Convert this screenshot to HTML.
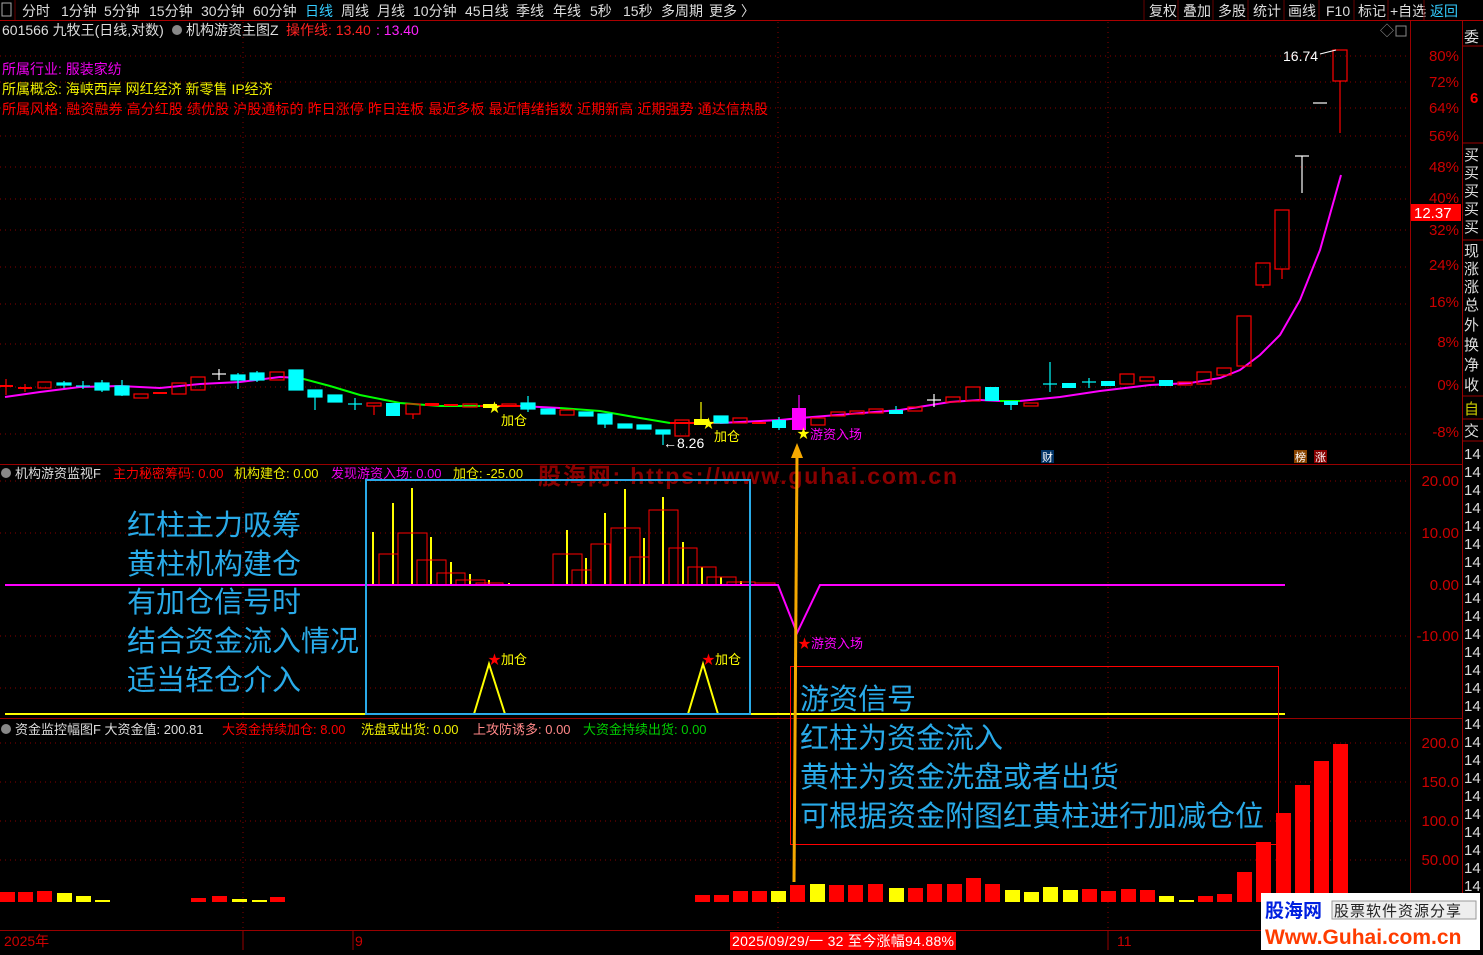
<!DOCTYPE html><html><head><meta charset="utf-8"><style>
body{margin:0;background:#000;width:1483px;height:950px;overflow:hidden;font-family:"Liberation Sans","Noto Sans CJK SC",sans-serif;}
svg text{font-family:"Liberation Sans","Noto Sans CJK SC",sans-serif;}
</style></head><body>
<svg width="1483" height="950" viewBox="0 0 1483 950" xmlns="http://www.w3.org/2000/svg">
<rect width="1483" height="950" fill="#000"/>
<!-- toolbar -->
<g font-size="14" fill="#ddd">
<rect x="2" y="3" width="9" height="13" fill="none" stroke="#aaa"/>
<line x1="15" y1="0" x2="15" y2="20" stroke="#600"/>
<text x="22" y="16">分时</text><text x="61" y="16">1分钟</text><text x="104" y="16">5分钟</text><text x="149" y="16">15分钟</text><text x="201" y="16">30分钟</text><text x="253" y="16">60分钟</text>
<text x="305" y="16" fill="#3cf">日线</text>
<text x="341" y="16">周线</text><text x="377" y="16">月线</text><text x="413" y="16">10分钟</text><text x="465" y="16">45日线</text><text x="516" y="16">季线</text><text x="553" y="16">年线</text><text x="590" y="16">5秒</text><text x="623" y="16">15秒</text><text x="661" y="16">多周期</text><text x="709" y="16">更多 〉</text>
<text x="1149" y="16">复权</text><text x="1183" y="16">叠加</text><text x="1218" y="16">多股</text><text x="1253" y="16">统计</text><text x="1288" y="16">画线</text><text x="1326" y="16">F10</text><text x="1358" y="16">标记</text><text x="1390" y="16">+自选</text>
<text x="1430" y="16" fill="#3cf">返回</text>
</g>
<g stroke="#600"><line x1="1144" y1="0" x2="1144" y2="20"/><line x1="1178" y1="0" x2="1178" y2="20"/><line x1="1213" y1="0" x2="1213" y2="20"/><line x1="1248" y1="0" x2="1248" y2="20"/><line x1="1284" y1="0" x2="1284" y2="20"/><line x1="1319" y1="0" x2="1319" y2="20"/><line x1="1354" y1="0" x2="1354" y2="20"/><line x1="1388" y1="0" x2="1388" y2="20"/><line x1="1424" y1="0" x2="1424" y2="20"/></g>
<line x1="0" y1="20.5" x2="1483" y2="20.5" stroke="#a00"/>
<!-- frame lines -->
<g stroke="#900" fill="none">
<line x1="1410.5" y1="21" x2="1410.5" y2="950"/>
<line x1="1462.5" y1="21" x2="1462.5" y2="950"/>
<line x1="0" y1="464.5" x2="1462" y2="464.5"/>
<line x1="0" y1="718.5" x2="1462" y2="718.5"/>
<line x1="0" y1="930.5" x2="1462" y2="930.5"/>
</g>
<!-- grid dotted -->
<g stroke="#800" stroke-dasharray="1 4">
<line x1="0" y1="56" x2="1410" y2="56"/><line x1="0" y1="82" x2="1410" y2="82"/><line x1="0" y1="108" x2="1410" y2="108"/><line x1="0" y1="136" x2="1410" y2="136"/><line x1="0" y1="167" x2="1410" y2="167"/><line x1="0" y1="199" x2="1410" y2="199"/><line x1="0" y1="230" x2="1410" y2="230"/><line x1="0" y1="267" x2="1410" y2="267"/><line x1="0" y1="304" x2="1410" y2="304"/><line x1="0" y1="344" x2="1410" y2="344"/><line x1="0" y1="387" x2="1410" y2="387"/><line x1="0" y1="434" x2="1410" y2="434"/>
<line x1="0" y1="481" x2="1410" y2="481"/><line x1="0" y1="533" x2="1410" y2="533"/><line x1="0" y1="636" x2="1410" y2="636"/><line x1="0" y1="688" x2="1410" y2="688"/>
<line x1="0" y1="743" x2="1410" y2="743"/><line x1="0" y1="782" x2="1410" y2="782"/><line x1="0" y1="821" x2="1410" y2="821"/><line x1="0" y1="860" x2="1410" y2="860"/>
<line x1="243" y1="22" x2="243" y2="930"/><line x1="778" y1="22" x2="778" y2="930"/><line x1="1108" y1="22" x2="1108" y2="930"/>
</g>
<!-- axis labels -->
<g font-size="15" fill="#c00" text-anchor="end">
<text x="1459" y="61">80%</text><text x="1459" y="87">72%</text><text x="1459" y="113">64%</text><text x="1459" y="141">56%</text><text x="1459" y="172">48%</text><text x="1459" y="203">40%</text><text x="1459" y="235">32%</text><text x="1459" y="270">24%</text><text x="1459" y="307">16%</text><text x="1459" y="347">8%</text><text x="1459" y="390">0%</text><text x="1459" y="437">-8%</text>
<text x="1459" y="486">20.00</text><text x="1459" y="538">10.00</text><text x="1459" y="590">0.00</text><text x="1459" y="641">-10.00</text>
<text x="1459" y="748">200.0</text><text x="1459" y="787">150.0</text><text x="1459" y="826">100.0</text><text x="1459" y="865">50.00</text>
</g>
<rect x="1411" y="204" width="50" height="17" fill="#f00"/>
<text x="1414" y="218" font-size="15" fill="#fff">12.37</text>
<!-- sidebar -->
<g font-size="15" fill="#ddd">
<text x="1464" y="42">委</text>
<text x="1470" y="103" fill="#f00" font-weight="bold">6</text>
<text x="1464" y="160">买</text><text x="1464" y="178">买</text><text x="1464" y="196">买</text><text x="1464" y="214">买</text><text x="1464" y="232">买</text>
<text x="1464" y="256">现</text><text x="1464" y="274">涨</text><text x="1464" y="292">涨</text><text x="1464" y="310">总</text><text x="1464" y="330">外</text><text x="1464" y="350">换</text><text x="1464" y="370">净</text><text x="1464" y="390">收</text>
<text x="1464" y="414" fill="#cc0">自</text><text x="1464" y="436">交</text>
</g>
<g stroke="#900"><line x1="1462" y1="46" x2="1483" y2="46"/><line x1="1462" y1="143" x2="1483" y2="143"/><line x1="1462" y1="240" x2="1483" y2="240"/><line x1="1462" y1="396" x2="1483" y2="396"/><line x1="1462" y1="419" x2="1483" y2="419"/><line x1="1462" y1="441" x2="1483" y2="441"/></g>
<g font-size="15" fill="#ddd">
<text x="1464" y="459">14</text><text x="1464" y="477">14</text><text x="1464" y="495">14</text><text x="1464" y="513">14</text><text x="1464" y="531">14</text><text x="1464" y="549">14</text><text x="1464" y="567">14</text><text x="1464" y="585">14</text><text x="1464" y="603">14</text><text x="1464" y="621">14</text><text x="1464" y="639">14</text><text x="1464" y="657">14</text><text x="1464" y="675">14</text><text x="1464" y="693">14</text><text x="1464" y="711">14</text><text x="1464" y="729">14</text><text x="1464" y="747">14</text><text x="1464" y="765">14</text><text x="1464" y="783">14</text><text x="1464" y="801">14</text><text x="1464" y="819">14</text><text x="1464" y="837">14</text><text x="1464" y="855">14</text><text x="1464" y="873">14</text><text x="1464" y="891">14</text>
</g>
<!-- header texts -->
<g font-size="14">
<text x="2" y="35" fill="#ddd">601566 九牧王(日线,对数)</text>
<circle cx="177" cy="30" r="5" fill="#888"/>
<text x="186" y="35" fill="#ddd">机构游资主图Z</text>
<text x="286" y="35" fill="#f22">操作线: 13.40</text>
<text x="376" y="35" fill="#f2f">: 13.40</text>
<text x="2" y="74" fill="#e0e">所属行业:  服装家纺</text>
<text x="2" y="94" fill="#ee0">所属概念:  海峡西岸 网红经济 新零售 IP经济</text>
<text x="2" y="114" fill="#f00" textLength="766">所属风格:  融资融券 高分红股 绩优股 沪股通标的 昨日涨停 昨日连板 最近多板 最近情绪指数 近期新高 近期强势 通达信热股</text>
<text x="1380" y="36" fill="#888">◇</text>
<rect x="1396" y="26" width="10" height="10" fill="none" stroke="#888"/>
</g>
<!-- MA line -->
<polyline fill="none" stroke="#f0f" stroke-width="2" points="5,397 40,392 80,387 120,386 160,388 200,384 240,382 280,377 300,378"/>
<polyline fill="none" stroke="#0f0" stroke-width="2" points="300,378 330,386 360,395 400,403 440,406 480,406"/>
<polyline fill="none" stroke="#f00" stroke-width="2" points="480,406 520,406"/>
<polyline fill="none" stroke="#f0f" stroke-width="2" points="520,406 560,408"/>
<polyline fill="none" stroke="#0f0" stroke-width="2" points="560,408 600,411 640,418 670,423"/>
<polyline fill="none" stroke="#f00" stroke-width="2" points="670,423 720,423"/>
<polyline fill="none" stroke="#f0f" stroke-width="2" points="720,423 780,420 800,418 850,414 900,410 950,402 980,400 1000,401"/>
<polyline fill="none" stroke="#0f0" stroke-width="2" points="1000,401 1020,401"/>
<polyline fill="none" stroke="#f0f" stroke-width="2" points="1020,401 1060,397 1100,391 1150,385 1190,383 1220,378 1240,370 1260,355 1280,335 1300,300 1320,250 1341,175"/>
<!-- candles -->
<g stroke-width="1.2">
<g stroke="#f00"><line x1="6" y1="379" x2="6" y2="395"/><line x1="0" y1="386" x2="13" y2="386" stroke-width="2"/>
<line x1="25" y1="384" x2="25" y2="392"/><line x1="18" y1="388" x2="32" y2="388" stroke-width="2"/></g>
<rect x="38" y="382" width="13" height="6" fill="none" stroke="#f00"/>
<g fill="#0ff" stroke="#0ff"><line x1="64" y1="381" x2="64" y2="388"/><rect x="57" y="383" width="14" height="2"/>
<line x1="83" y1="381" x2="83" y2="389"/><line x1="76" y1="386" x2="90" y2="386"/>
<rect x="95" y="383" width="14" height="7"/><line x1="102" y1="380" x2="102" y2="392"/>
<rect x="115" y="386" width="14" height="9"/><line x1="122" y1="380" x2="122" y2="396"/></g>
<rect x="134" y="394" width="14" height="4" fill="none" stroke="#f00"/>
<rect x="153" y="392" width="14" height="2" fill="#f00"/>
<rect x="172" y="383" width="14" height="11" fill="none" stroke="#f00"/>
<rect x="191" y="377" width="14" height="13" fill="none" stroke="#f00"/>
<g stroke="#fff"><line x1="219" y1="369" x2="219" y2="380"/><line x1="212" y1="374" x2="226" y2="374"/></g>
<g fill="#0ff" stroke="#0ff"><rect x="231" y="375" width="14" height="5"/><line x1="238" y1="373" x2="238" y2="389"/>
<rect x="250" y="373" width="14" height="7"/><line x1="257" y1="371" x2="257" y2="382"/></g>
<rect x="270" y="372" width="14" height="8" fill="none" stroke="#f00"/>
<g fill="#0ff" stroke="#0ff"><rect x="289" y="370" width="14" height="20"/>
<rect x="308" y="390" width="14" height="7"/><line x1="315" y1="390" x2="315" y2="410"/>
<rect x="328" y="395" width="14" height="7"/>
<line x1="355" y1="398" x2="355" y2="410"/><line x1="348" y1="404" x2="362" y2="404"/></g>
<rect x="367" y="403" width="14" height="3" fill="none" stroke="#f00"/><line x1="374" y1="406" x2="374" y2="415" stroke="#f00"/>
<rect x="386" y="403" width="14" height="13" fill="#0ff"/>
<rect x="406" y="404" width="14" height="10" fill="none" stroke="#f00"/><line x1="413" y1="414" x2="413" y2="419" stroke="#f00"/>
<rect x="425" y="403" width="14" height="3" fill="#f00"/>
<line x1="444" y1="405" x2="458" y2="405" stroke="#f00" stroke-width="2"/>
<rect x="463" y="404" width="14" height="3" fill="none" stroke="#f00"/>
<rect x="483" y="404" width="14" height="4" fill="#ff0"/>
<rect x="502" y="404" width="14" height="2" fill="none" stroke="#f00"/>
<g fill="#0ff" stroke="#0ff"><rect x="521" y="403" width="14" height="6"/><line x1="528" y1="396" x2="528" y2="412"/>
<rect x="541" y="409" width="14" height="5"/></g>
<rect x="560" y="410" width="14" height="5" fill="none" stroke="#f00"/>
<g fill="#0ff" stroke="#0ff"><rect x="579" y="412" width="14" height="4"/>
<rect x="598" y="414" width="14" height="10"/><line x1="605" y1="414" x2="605" y2="428"/>
<rect x="618" y="424" width="14" height="4"/>
<rect x="637" y="425" width="14" height="4"/>
<rect x="656" y="430" width="14" height="4"/><line x1="663" y1="430" x2="663" y2="445"/></g>
<rect x="675" y="420" width="14" height="16" fill="none" stroke="#f00"/>
<rect x="694" y="419" width="14" height="6" fill="#ff0"/><line x1="701" y1="402" x2="701" y2="425" stroke="#ff0"/>
<g fill="#0ff" stroke="#0ff"><rect x="714" y="416" width="14" height="7"/></g>
<rect x="733" y="418" width="14" height="5" fill="none" stroke="#f00"/>
<line x1="752" y1="423" x2="766" y2="423" stroke="#f00" stroke-width="2"/>
<rect x="772" y="420" width="14" height="8" fill="#0ff"/><line x1="779" y1="417" x2="779" y2="430" stroke="#0ff"/>
<rect x="792" y="408" width="14" height="22" fill="#f0f"/><line x1="799" y1="395" x2="799" y2="430" stroke="#f0f"/>
<rect x="811" y="418" width="14" height="7" fill="none" stroke="#f00"/>
<rect x="831" y="412" width="14" height="4" fill="none" stroke="#f00"/>
<rect x="850" y="411" width="14" height="3" fill="none" stroke="#f00"/>
<rect x="869" y="409" width="14" height="4" fill="none" stroke="#f00"/>
<rect x="889" y="410" width="14" height="4" fill="#0ff"/><line x1="896" y1="406" x2="896" y2="414" stroke="#0ff"/>
<rect x="908" y="407" width="14" height="4" fill="none" stroke="#f00"/>
<g stroke="#fff"><line x1="934" y1="394" x2="934" y2="407"/><line x1="927" y1="400" x2="941" y2="400"/></g>
<rect x="946" y="397" width="14" height="5" fill="none" stroke="#f00"/>
<rect x="966" y="387" width="14" height="14" fill="none" stroke="#f00"/>
<rect x="985" y="387" width="14" height="14" fill="#0ff"/>
<rect x="1004" y="401" width="14" height="4" fill="#0ff"/><line x1="1011" y1="401" x2="1011" y2="410" stroke="#0ff"/>
<rect x="1024" y="403" width="14" height="3" fill="none" stroke="#f00"/>
<g stroke="#0ff"><line x1="1050" y1="362" x2="1050" y2="392"/><line x1="1043" y1="384" x2="1057" y2="384"/></g>
<rect x="1062" y="383" width="14" height="5" fill="#0ff"/>
<g stroke="#0ff"><line x1="1089" y1="378" x2="1089" y2="388"/><line x1="1082" y1="382" x2="1096" y2="382"/></g>
<rect x="1101" y="381" width="14" height="5" fill="#0ff"/>
<rect x="1120" y="374" width="14" height="10" fill="none" stroke="#f00"/>
<rect x="1140" y="377" width="14" height="4" fill="none" stroke="#f00"/>
<rect x="1159" y="380" width="14" height="6" fill="#0ff"/>
<rect x="1178" y="382" width="14" height="3" fill="none" stroke="#f00"/>
<rect x="1197" y="372" width="14" height="12" fill="none" stroke="#f00"/>
<rect x="1217" y="368" width="14" height="7" fill="none" stroke="#f00"/>
<rect x="1237" y="316" width="14" height="50" fill="none" stroke="#f00"/>
<rect x="1256" y="263" width="14" height="22" fill="none" stroke="#f00"/><line x1="1263" y1="285" x2="1263" y2="288" stroke="#f00"/>
<rect x="1275" y="210" width="14" height="59" fill="none" stroke="#f00"/><line x1="1282" y1="269" x2="1282" y2="279" stroke="#f00"/>
<g stroke="#fff"><line x1="1302" y1="156" x2="1302" y2="193"/><line x1="1295" y1="156" x2="1309" y2="156"/><line x1="1313" y1="103" x2="1327" y2="103"/></g>
<rect x="1333" y="50" width="14" height="31" fill="none" stroke="#f00"/><line x1="1340" y1="81" x2="1340" y2="133" stroke="#f00"/>
</g>
<text x="1283" y="61" font-size="14" fill="#fff">16.74</text>
<line x1="1320" y1="54" x2="1336" y2="50" stroke="#fff"/>
<text x="663" y="448" font-size="14" fill="#fff">←8.26</text>
<text x="488" y="412" font-size="13" fill="#ff0">★</text><text x="501" y="425" font-size="13" fill="#ff0">加仓</text>
<text x="702" y="428" font-size="13" fill="#ff0">★</text><text x="714" y="441" font-size="13" fill="#ff0">加仓</text>
<text x="797" y="438" font-size="13" fill="#ff0">★</text><text x="810" y="439" font-size="13" fill="#f0f">游资入场</text>
<rect x="1041" y="450" width="13" height="13" fill="#036"/><text x="1042" y="461" font-size="11" fill="#fff">财</text>
<rect x="1294" y="450" width="13" height="13" fill="#840"/><text x="1295" y="461" font-size="11" fill="#fff">榜</text>
<rect x="1314" y="450" width="13" height="13" fill="#800"/><text x="1315" y="461" font-size="11" fill="#fff">涨</text>
<!-- indicator panel header -->
<g font-size="13">
<circle cx="6" cy="473" r="5" fill="#888"/>
<text x="15" y="478" fill="#ddd">机构游资监视F</text>
<text x="113" y="478" fill="#f00">主力秘密筹码: 0.00</text>
<text x="234" y="478" fill="#ee0">机构建仓: 0.00</text>
<text x="331" y="478" fill="#e0e">发现游资入场: 0.00</text>
<text x="453" y="478" fill="#ee0">加仓: -25.00</text>
</g>
<text x="538" y="484" font-size="23" font-weight="bold" fill="#8a0000" textLength="419">股海网:  https://www.guhai.com.cn</text>
<!-- yellow bars -->
<g stroke="#ff0" stroke-width="2">
<line x1="373" y1="585" x2="373" y2="532"/><line x1="393" y1="585" x2="393" y2="503"/><line x1="412" y1="585" x2="412" y2="488"/><line x1="431" y1="585" x2="431" y2="537"/><line x1="451" y1="585" x2="451" y2="562"/><line x1="470" y1="585" x2="470" y2="574"/><line x1="489" y1="585" x2="489" y2="580"/><line x1="509" y1="585" x2="509" y2="583"/>
<line x1="567" y1="585" x2="567" y2="530"/><line x1="586" y1="585" x2="586" y2="558"/><line x1="605" y1="585" x2="605" y2="513"/><line x1="625" y1="585" x2="625" y2="489"/><line x1="644" y1="585" x2="644" y2="538"/><line x1="663" y1="585" x2="663" y2="497"/><line x1="683" y1="585" x2="683" y2="542"/><line x1="702" y1="585" x2="702" y2="567"/><line x1="721" y1="585" x2="721" y2="577"/><line x1="741" y1="585" x2="741" y2="581"/>
</g>
<g fill="none" stroke="#f00">
<rect x="379" y="554" width="19" height="31"/><rect x="398" y="533" width="29" height="52"/><rect x="417" y="560" width="29" height="25"/><rect x="437" y="573" width="28" height="12"/><rect x="456" y="580" width="29" height="5"/><rect x="476" y="583" width="27" height="2"/>
<rect x="553" y="554" width="29" height="31"/><rect x="572" y="570" width="19" height="15"/><rect x="591" y="544" width="19" height="41"/><rect x="611" y="528" width="29" height="57"/><rect x="630" y="557" width="19" height="28"/><rect x="649" y="510" width="29" height="75"/><rect x="669" y="548" width="28" height="37"/><rect x="688" y="567" width="28" height="18"/><rect x="707" y="577" width="29" height="8"/><rect x="727" y="582" width="28" height="3"/><rect x="755" y="583" width="20" height="2"/>
</g>
<polyline fill="none" stroke="#f0f" stroke-width="2" points="5,585 778,585 797,633 820,585 1285,585"/>
<polyline fill="none" stroke="#ff0" stroke-width="2" points="5,714 474,714 489,664 505,714 688,714 703,664 718,714 1285,714"/>
<text x="488" y="664" font-size="13" fill="#f00">★</text><text x="501" y="664" font-size="13" fill="#ff0">加仓</text>
<text x="702" y="664" font-size="13" fill="#f00">★</text><text x="715" y="664" font-size="13" fill="#ff0">加仓</text>
<text x="798" y="648" font-size="13" fill="#f00">★</text><text x="811" y="648" font-size="13" fill="#f0f">游资入场</text>
<rect x="366" y="480" width="384" height="234" fill="none" stroke="#29aae8" stroke-width="2"/>
<rect x="790.5" y="666.5" width="488" height="178" fill="none" stroke="#f00"/>
<!-- orange arrow -->
<line x1="797" y1="455" x2="794" y2="882" stroke="#f5a800" stroke-width="3"/>
<polygon points="797,443 791,458 803,458" fill="#f5a800"/>
<!-- annotation text -->
<g font-size="29" fill="#29aae8">
<text x="127" y="535">红柱主力吸筹</text><text x="127" y="574">黄柱机构建仓</text><text x="127" y="612">有加仓信号时</text><text x="127" y="651">结合资金流入情况</text><text x="127" y="690">适当轻仓介入</text>
<text x="800" y="709">游资信号</text><text x="800" y="748">红柱为资金流入</text><text x="800" y="787">黄柱为资金洗盘或者出货</text><text x="800" y="826">可根据资金附图红黄柱进行加减仓位</text>
</g>
<!-- third panel -->
<g font-size="13">
<circle cx="6" cy="729" r="5" fill="#888"/>
<text x="15" y="734" fill="#ddd">资金监控幅图F 大资金值: 200.81</text>
<text x="222" y="734" fill="#f00">大资金持续加仓: 8.00</text>
<text x="361" y="734" fill="#ee0">洗盘或出货: 0.00</text>
<text x="473" y="734" fill="#f88">上攻防诱多: 0.00</text>
<text x="583" y="734" fill="#0c0">大资金持续出货: 0.00</text>
</g>
<g fill="#f00">
<rect x="0" y="892" width="15" height="10"/><rect x="18" y="892" width="15" height="10"/><rect x="37" y="891" width="15" height="11"/>
<rect x="191" y="898" width="15" height="4"/><rect x="212" y="896" width="15" height="6"/><rect x="270" y="897" width="15" height="5"/>
<rect x="695" y="895" width="15" height="7"/><rect x="714" y="895" width="15" height="7"/><rect x="733" y="891" width="15" height="11"/><rect x="752" y="891" width="15" height="11"/><rect x="790" y="885" width="15" height="17"/><rect x="829" y="885" width="15" height="17"/><rect x="848" y="885" width="15" height="17"/><rect x="868" y="884" width="15" height="18"/>
<rect x="908" y="888" width="15" height="14"/><rect x="927" y="884" width="15" height="18"/><rect x="947" y="884" width="15" height="18"/><rect x="966" y="878" width="15" height="24"/><rect x="985" y="884" width="15" height="18"/>
<rect x="1082" y="889" width="15" height="13"/><rect x="1101" y="891" width="15" height="11"/><rect x="1121" y="889" width="15" height="13"/><rect x="1140" y="890" width="15" height="12"/>
<rect x="1198" y="896" width="15" height="6"/><rect x="1217" y="894" width="15" height="8"/><rect x="1237" y="872" width="15" height="30"/><rect x="1256" y="842" width="15" height="60"/><rect x="1276" y="813" width="15" height="89"/><rect x="1295" y="785" width="15" height="117"/><rect x="1314" y="761" width="15" height="141"/><rect x="1333" y="744" width="15" height="158"/>
</g>
<g fill="#ff0">
<rect x="57" y="893" width="15" height="9"/><rect x="76" y="896" width="15" height="6"/><rect x="95" y="900" width="15" height="2"/>
<rect x="232" y="899" width="15" height="3"/><rect x="252" y="900" width="15" height="2"/>
<rect x="771" y="891" width="15" height="11"/><rect x="810" y="884" width="15" height="18"/><rect x="889" y="888" width="15" height="14"/>
<rect x="1005" y="890" width="15" height="12"/><rect x="1024" y="892" width="15" height="10"/><rect x="1043" y="887" width="15" height="15"/><rect x="1063" y="890" width="15" height="12"/>
<rect x="1159" y="896" width="15" height="6"/><rect x="1179" y="900" width="15" height="2"/>
</g>
<!-- bottom axis -->
<g font-size="14" fill="#c00">
<text x="4" y="946">2025年</text>
<line x1="243" y1="931" x2="243" y2="950" stroke="#900"/>
<text x="355" y="946">9</text>
<line x1="353" y1="931" x2="353" y2="950" stroke="#900"/>
<rect x="730" y="932" width="226" height="18" fill="#f00"/>
<text x="732" y="946" fill="#fff" textLength="222">2025/09/29/一 32 至今涨幅94.88%</text>
<line x1="1108" y1="931" x2="1108" y2="950" stroke="#900"/>
<text x="1117" y="946">11</text>
</g>
<!-- logo -->
<rect x="1261" y="893" width="219" height="57" fill="#fff"/>
<text x="1265" y="917" font-size="19" font-weight="bold" fill="#0020e0">股海网</text>
<rect x="1332" y="901" width="144" height="18" fill="#eee" stroke="#999"/>
<text x="1334" y="916" font-size="15" fill="#222" letter-spacing="1">股票软件资源分享</text>
<text x="1265" y="944" font-size="21" font-weight="bold" fill="#ff3c00">Www.Guhai.com.cn</text>
</svg>
</body></html>
